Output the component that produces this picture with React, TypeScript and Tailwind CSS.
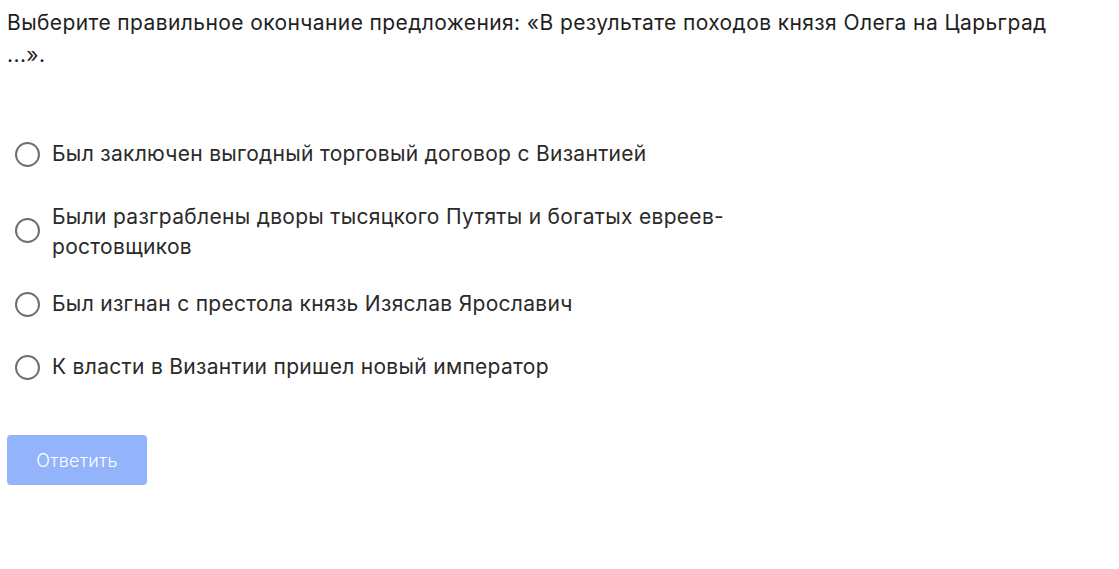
import React from "react";

const options = [
  "Был заключен выгодный торговый договор с Византией",
  "Были разграблены дворы тысяцкого Путяты и богатых евреев-ростовщиков",
  "Был изгнан с престола князь Изяслав Ярославич",
  "К власти в Византии пришел новый император",
];

export default function App() {
  return (
    <div
      className="w-[1119px] h-[569px] bg-white px-[7px] pt-[7px] text-[#1f1f1f]"
      style={{ fontFamily: "Inter, 'Noto Sans', sans-serif" }}
    >
      <p className="text-[21px] leading-[32px] tracking-[0.4px] max-w-[1060px]">
        Выберите правильное окончание предложения: «В результате походов князя Олега на Царьград ...».
      </p>
      <div className="mt-[68px] flex flex-col">
        {options.map((o, i) => (
          <label
            key={i}
            className={
              "flex items-center gap-[12px] pl-[8px] " +
              (i === 0 ? "" : i === 2 ? "mt-[27px]" : "mt-[33px]")
            }
          >
            <span
              className={
                "w-[25px] h-[25px] shrink-0 rounded-full border-2 border-[#6f6f6f] bg-white " +
                (i === 1 ? "mb-[4px]" : "")
              }
            />
            <span className="text-[21px] leading-[30px] text-[#2a2a2a] tracking-[0.3px] max-w-[700px]">
              {o}
            </span>
          </label>
        ))}
      </div>
      <button className="mt-[53px] w-[140px] h-[50px] rounded-[4px] bg-[#93b3fb] text-white text-[18px] font-light tracking-[0.3px]">
        Ответить
      </button>
    </div>
  );
}
